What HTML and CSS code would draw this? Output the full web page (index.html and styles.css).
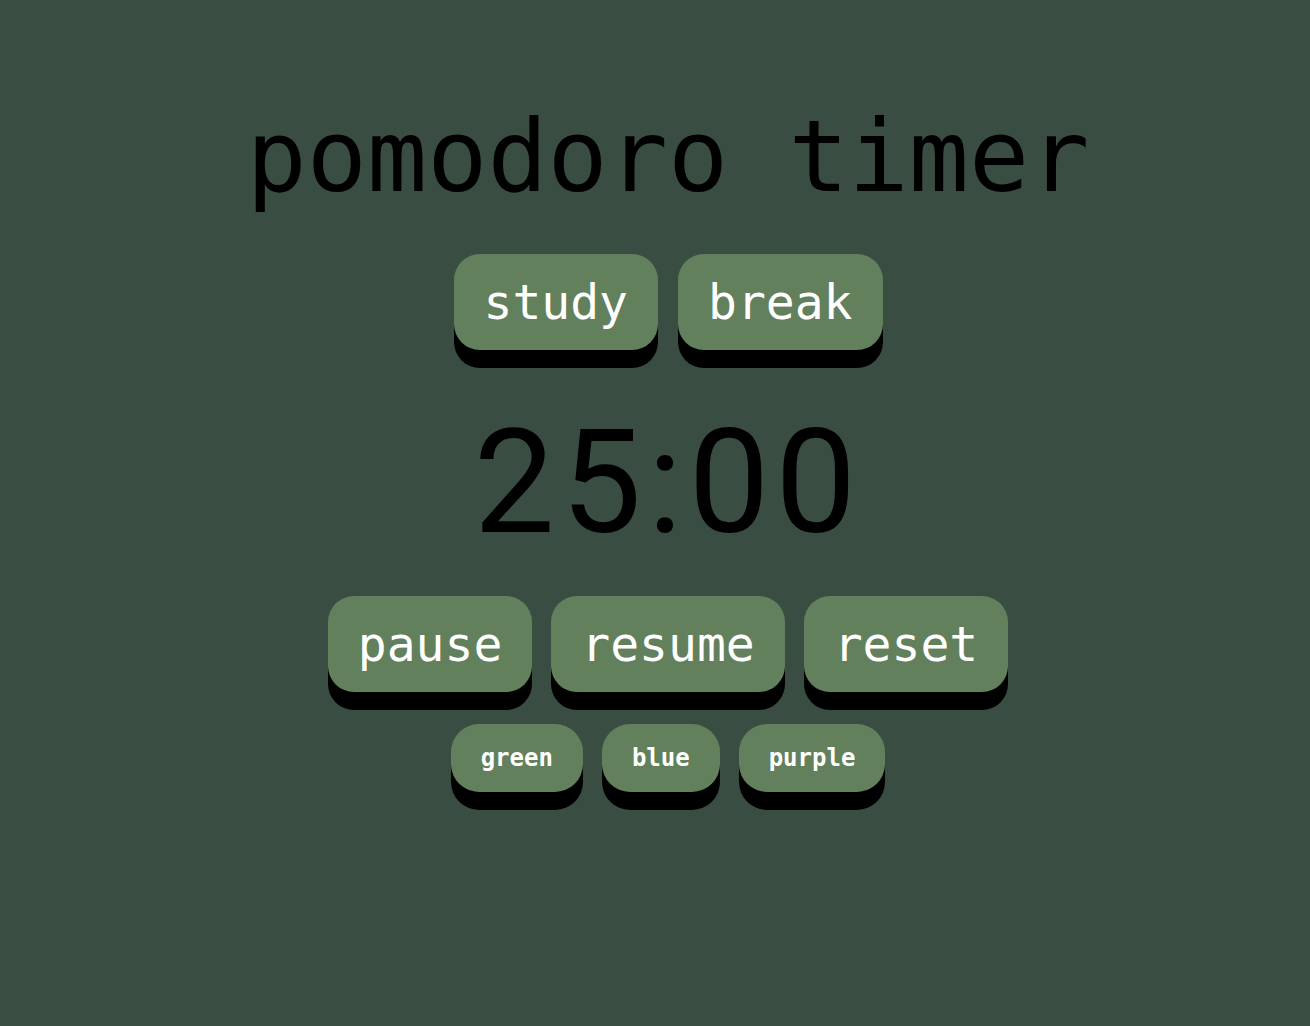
FILE: index.html
```html
<!DOCTYPE html>
<html lang="en">
<head>
<meta charset="utf-8">
<title>pomodoro timer</title>
<link rel="stylesheet" href="styles.css">
</head>
<body>
<main class="app">
  <h1 class="title">pomodoro timer</h1>
  <div class="row modes">
    <button class="btn btn-lg">study</button>
    <button class="btn btn-lg">break</button>
  </div>
  <div class="timer">25:00</div>
  <div class="row controls">
    <button class="btn btn-lg">pause</button>
    <button class="btn btn-lg">resume</button>
    <button class="btn btn-lg">reset</button>
  </div>
  <div class="row themes">
    <button class="btn btn-sm">green</button>
    <button class="btn btn-sm">blue</button>
    <button class="btn btn-sm">purple</button>
  </div>
</main>
</body>
</html>
```
FILE: styles.css
```css
html, body {
  margin: 0;
  padding: 0;
  background: #3a4d42;
  height: 100%;
}

.app {
  display: flex;
  flex-direction: column;
  align-items: center;
  padding: 107px 0 0 26px;
  box-sizing: border-box;
  min-height: 100%;
}

.title {
  margin: 0;
  font-family: "DejaVu Sans Mono", monospace;
  font-weight: normal;
  font-size: 100px;
  line-height: 100px;
  color: #000;
}

.row {
  display: flex;
  gap: 20px;
}

.modes {
  margin-top: 47px;
}

.timer {
  margin-top: 61px;
  font-family: "Roboto", "Liberation Sans", sans-serif;
  font-size: 144px;
  line-height: 144px;
  letter-spacing: 6px;
  color: #000;
}

.controls {
  margin-top: 41px;
  gap: 19px;
}

.themes {
  margin-top: 32px;
  gap: 19px;
}

.btn {
  border: none;
  margin: 0;
  background: #62805c;
  color: #fff;
  font-family: "DejaVu Sans Mono", monospace;
  box-shadow: 0 18px 0 #000;
  cursor: pointer;
}

.btn-lg {
  height: 96px;
  padding: 0 30px;
  font-size: 48px;
  line-height: 96px;
  border-radius: 26px;
}

.btn-sm {
  height: 68px;
  padding: 0 30px;
  font-size: 24px;
  font-weight: bold;
  line-height: 68px;
  border-radius: 28px;
}
```
